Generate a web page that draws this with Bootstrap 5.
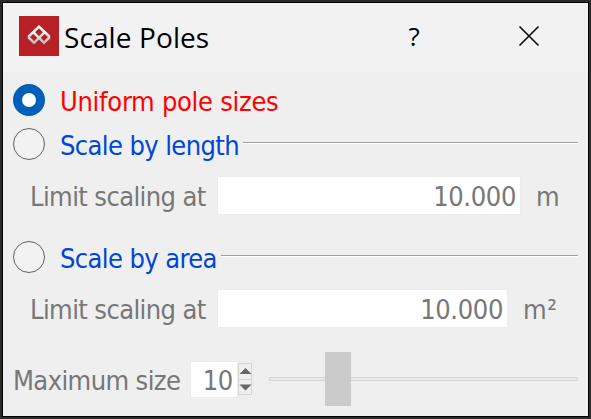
<!DOCTYPE html>
<html lang="en">
<head>
<meta charset="utf-8">
<meta name="viewport" content="width=device-width, initial-scale=1">
<title>Scale Poles</title>
<link href="https://cdn.jsdelivr.net/npm/bootstrap@5.3.0/dist/css/bootstrap.min.css" rel="stylesheet">
<style>
  body { width: 591px; height: 419px; background: #2b2b2b; padding: 2px; overflow: hidden; }
  .dialog { height: 415px; border: 1px solid #000; background: #efefef; font: 27px/32px "DejaVu Sans Condensed", "DejaVu Sans", sans-serif; font-stretch: condensed; letter-spacing: -.6px; color: #777; white-space: nowrap; }
  .titlebar { height: 69px; background: #f2f2f2; color: #000; padding-left: 16px; letter-spacing: 0; }
  .title-text { font: 28px/36px "Open Sans", "Noto Sans", sans-serif; margin: -2px 0 0 5px; width: 340px; letter-spacing: .1px; }
  .help { font: 26px/36px "Open Sans", "Noto Sans", sans-serif; width: 20px; margin: -4px 94px 0 0; }
  .titlebar .close-icon { margin-top: -3px; }
  .form-area { padding: 12px 10px 0; }
  .choice { height: 32px; }
  .choice label, .limit-label, .unit, .max-label { padding-top: 3px; }
  .choice .form-check-input { width: 32px; height: 32px; margin: 0 15px 0 0; border: 1.5px solid #626262; background: #f2f2f2; flex: none; box-shadow: none; }
  .choice .form-check-input:checked { border: 9.5px solid #005fb8; background: #fff; }
  .first { margin-bottom: 12px; letter-spacing: -.29px; }
  .red { color: #f00; }
  .blue { color: #0046d5; }
  .rule { height: 2px; background: #a0a0a0; border-bottom: 1px solid #fff; margin: 0 0 2px 4px; }
  .limit { height: 37px; margin: 17px 0 27px; padding-left: 17px; }
  .limit.second { margin-bottom: 25px; }
  .limit-label { width: 188px; }
  .value { width: 302px; height: 37px; background: #fff; box-shadow: 0 0 0 1px #ececec; padding: 3px 4px 0 0; line-height: 34px; text-align: right; letter-spacing: -.35px; }
  .second .value { width: 289px; }
  .unit { margin-left: 16px; letter-spacing: .6px; }
  .max-row { height: 54px; }
  .max-label { width: 178px; }
  .spin { width: 62px; height: 35px; margin-top: 1px; background: #fff; box-shadow: 0 0 0 1px #ececec; }
  .spin-value { width: 46px; text-align: right; padding: 3px 4px 0 0; letter-spacing: -.3px; }
  .slider { margin-left: 16px; width: 309px; height: 54px; }
  .dialog svg { display: block; flex: none; }
</style>
<script src="https://cdn.jsdelivr.net/npm/bootstrap@5.3.0/dist/js/bootstrap.bundle.min.js"></script>
</head>
<body>
<main class="dialog">
  <header class="titlebar d-flex align-items-center">
    <svg class="mb-1" width="40" height="40" viewBox="0 0 40 40"><defs><linearGradient id="g" x2="0" y2="1"><stop offset=".3" stop-color="#fff"/><stop offset="1" stop-color="#bbb"/></linearGradient></defs><rect width="40" height="40" fill="#b72126"/><path d="M9.200 21 20 10.700 30.800 21M9.200 21l5.800 5.800 10.500-10.500M30.800 21l-5.800 5.800L14.500 16.300" fill="none" stroke="url(#g)" stroke-width="2.500"/></svg>
    <span class="title-text">Scale Poles</span>
    <span class="help text-center">?</span>
    <svg class="close-icon" width="22" height="22" viewBox="0 0 22 22"><path d="M1.500 1.500 20.500 20.500M20.500 1.500 1.500 20.500" stroke="#111" stroke-width="1.700"/></svg>
  </header>
  <form class="form-area">
    <div class="choice first d-flex align-items-center"><input class="form-check-input" type="radio" name="mode" id="uniform" checked><label class="red" for="uniform">Uniform pole sizes</label></div>
    <div class="choice d-flex align-items-center"><input class="form-check-input" type="radio" name="mode" id="length"><label class="blue" for="length">Scale by length</label><div class="rule flex-grow-1"></div></div>
    <div class="limit d-flex align-items-center"><span class="limit-label">Limit scaling at</span><div class="value">10.000</div><span class="unit">m</span></div>
    <div class="choice d-flex align-items-center"><input class="form-check-input" type="radio" name="mode" id="area"><label class="blue" for="area">Scale by area</label><div class="rule flex-grow-1"></div></div>
    <div class="limit second d-flex align-items-center"><span class="limit-label">Limit scaling at</span><div class="value">10.000</div><span class="unit">m²</span></div>
    <div class="max-row d-flex align-items-center">
      <span class="max-label">Maximum size</span>
      <div class="spin d-flex align-items-center"><span class="spin-value">10</span>
        <svg width="16" height="35" viewBox="0 0 16 35"><path d="M0 0h16v35H0z" fill="#efefef"/><path d="M1.500 1.500h13v31h-13zM1.500 17.500h13" fill="none" stroke="#d4d4d4"/><path d="M2.500 12 8.500 6l6 6zM2.500 22.500h12l-6 6z" fill="#686868"/></svg>
      </div>
      <svg class="slider" viewBox="0 0 309 54"><path d="M.5 25.500h308v3H.5z" fill="#e7eaea" stroke="#d4d4d4"/><path d="M56 0h26v54H56z" fill="#cbcbcb"/></svg>
    </div>
  </form>
</main>
</body>
</html>
